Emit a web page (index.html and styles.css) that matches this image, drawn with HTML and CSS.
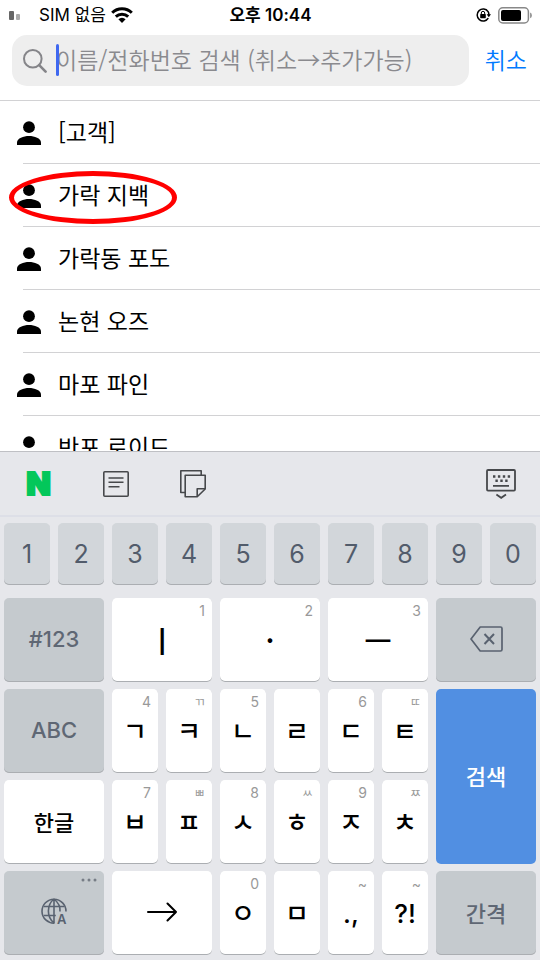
FILE: index.html
```html
<!DOCTYPE html>
<html lang="ko">
<head>
<meta charset="utf-8">
<meta name="viewport" content="width=device-width, initial-scale=1">
<title>연락처 검색</title>
<link rel="stylesheet" href="styles.css">
</head>
<body>
<div class="status">
  <div class="status-left">
    <svg width="12" height="10" viewBox="0 0 12 10" aria-hidden="true"><rect x="0" y="1" width="5" height="9" rx="1" fill="#666"/><rect x="7" y="4" width="4" height="6" rx="1" fill="#aaa"/></svg>
    <span class="carrier">SIM 없음</span>
    <svg width="22" height="16" viewBox="0 0 22 16" aria-hidden="true"><g fill="none" stroke="#000" stroke-width="3"><path d="M1.2 5.8a14 14 0 0 1 19.6 0"/><path d="M4.8 9.7a9 9 0 0 1 12.4 0"/></g><path d="M11 16l-3.6-3.8a5 5 0 0 1 7.2 0z"/></svg>
  </div>
  <div class="clock">오후 10:44</div>
  <div class="status-right">
    <svg width="15" height="14" viewBox="0 0 15 14" aria-hidden="true"><path d="M12.1 3.6A6 6 0 1 0 12.3 10.2M12.9 7A6 6 0 0 0 12.1 3.7" fill="none" stroke="#000" stroke-width="1.5"/><path d="M10.6 6.3h4.4l-2.2 2.9z"/><rect x="4.2" y="6" width="5.6" height="4.2" rx=".6"/><path d="M5.3 6V5a1.7 1.7 0 0 1 3.4 0v1" fill="none" stroke="#000"/></svg>
    <svg width="34" height="17" viewBox="0 0 34 17" aria-hidden="true"><rect x=".8" y=".8" width="29.6" height="15.2" rx="4" fill="none" stroke="#888" stroke-width="1.5"/><rect x="3" y="3" width="20" height="11" rx="2"/><path d="M32 5.6q2 .8 2 2.8t-2 2.8z" fill="#999"/></svg>
  </div>
</div>
<form class="search">
  <div class="field">
    <svg width="24" height="24" viewBox="0 0 24 24" fill="none" stroke="#858589" aria-hidden="true"><circle cx="9.8" cy="9.8" r="8.8" stroke-width="2"/><path d="M16.2 16.2l6.4 6.4" stroke-width="2.6" stroke-linecap="round"/></svg>
    <label class="query"><span class="caret"></span><input type="text" aria-label="검색" placeholder="이름/전화번호 검색 (취소→추가가능)"></label>
  </div>
  <button type="button" class="cancel">취소</button>
</form>
<svg class="defs" width="0" height="0" aria-hidden="true"><symbol id="person" viewBox="0 0 24 24"><circle cx="12" cy="6.2" r="5.9"/><path d="M0 24v-2.6c0-4 6.5-6.4 12-6.4s12 2.4 12 6.4V24z"/></symbol></svg>
<ul class="contacts">
  <li><svg class="person"><use href="#person"/></svg><a href="#c1">[고객]</a></li>
  <li><svg class="person"><use href="#person"/></svg><a href="#c2">가락 지백</a><span class="marker"></span></li>
  <li><svg class="person"><use href="#person"/></svg><a href="#c3">가락동 포도</a></li>
  <li><svg class="person"><use href="#person"/></svg><a href="#c4">논현 오즈</a></li>
  <li><svg class="person"><use href="#person"/></svg><a href="#c5">마포 파인</a></li>
  <li><svg class="person"><use href="#person"/></svg><a href="#c6">반포 로이드</a></li>
</ul>
<div class="keyboard">
  <div class="tools">
    <button class="tool naver">N</button>
    <button class="tool" aria-label="문서"><svg width="26" height="26" viewBox="0 0 26 26" fill="none" stroke="#46484b" stroke-width="1.6"><rect x=".8" y=".8" width="24.4" height="24.4" rx="1"/><path d="M5.5 7h15M5.5 11.2h15M5.5 15.7h11"/></svg></button>
    <button class="tool" aria-label="메모"><svg width="26" height="28" viewBox="0 0 26 28" fill="none" stroke="#46484b" stroke-width="1.6" stroke-linejoin="round"><path d="M5 22.5H.8V.8h20.400v4.400"/><path d="M5.200 5.200h20V19l-8 7.800h-12z"/><path d="M17.200 26.600v-7.800h7.800"/></svg></button>
    <button class="tool hide" aria-label="키보드 닫기"><svg width="30" height="30" viewBox="0 0 30 30" fill="none" stroke="#46484b" stroke-width="1.8"><rect x="1" y="1" width="28" height="20.6" rx="1"/><path d="M7 7.5h17.500" stroke-width="2.4" stroke-dasharray="2.4 2.5"/><path d="M9.400 11.700h13" stroke-width="2.4" stroke-dasharray="2.4 2.5"/><path d="M7 16.800h16M10.400 25.600l4.800 3.200 4.800-3.200"/></svg></button>
  </div>
  <div class="digits">
    <button class="key">1</button><button class="key">2</button><button class="key">3</button><button class="key">4</button><button class="key">5</button><button class="key">6</button><button class="key">7</button><button class="key">8</button><button class="key">9</button><button class="key">0</button>
  </div>
  <div class="keys">
    <button class="key wide fn">#123</button>
    <button class="key wide vowel"><span class="hint">1</span>ㅣ</button>
    <button class="key wide vowel"><span class="hint">2</span>·</button>
    <button class="key wide vowel"><span class="hint">3</span>ㅡ</button>
    <button class="key wide fn" aria-label="지우기"><svg width="33" height="26" viewBox="0 0 33 26" fill="none" stroke="#596270" stroke-width="1.7" stroke-linejoin="round"><path d="M10.200 1h20.300q1.500 0 1.500 1.500v21q0 1.500-1.500 1.500H10.200L1 13z"/><path d="M14.500 8l9.500 10M24 8l-9.500 10" stroke-width="2"/></svg></button>

    <button class="key wide fn">ABC</button>
    <button class="key"><span class="hint">4</span>ㄱ</button>
    <button class="key"><span class="hint jamo">ㄲ</span>ㅋ</button>
    <button class="key"><span class="hint">5</span>ㄴ</button>
    <button class="key">ㄹ</button>
    <button class="key"><span class="hint">6</span>ㄷ</button>
    <button class="key"><span class="hint jamo">ㄸ</span>ㅌ</button>
    <button class="key wide enter">검색</button>

    <button class="key wide word">한글</button>
    <button class="key"><span class="hint">7</span>ㅂ</button>
    <button class="key"><span class="hint jamo">ㅃ</span>ㅍ</button>
    <button class="key"><span class="hint">8</span>ㅅ</button>
    <button class="key"><span class="hint jamo">ㅆ</span>ㅎ</button>
    <button class="key"><span class="hint">9</span>ㅈ</button>
    <button class="key"><span class="hint jamo">ㅉ</span>ㅊ</button>

    <button class="key wide fn" aria-label="언어"><svg class="more" width="16" height="4" viewBox="0 0 16 4" fill="#777d86"><circle cx="2" cy="2" r="1.5"/><circle cx="8" cy="2" r="1.5"/><circle cx="14" cy="2" r="1.5"/></svg><svg class="globe" width="27" height="27" viewBox="0 0 27 27" fill="none" stroke="#596270" stroke-width="1.6"><path d="M25 13.500A12 12 0 1 0 13.500 25.200"/><path d="M13 1v24M13 1C5.500 7 5.500 19 13 25M13 1c4.500 3.600 6.400 8 6 12.500M3 8.500h20M2.800 17.500h12"/><text x="16" y="25.5" class="globe-a">A</text></svg></button>
    <button class="key wide" aria-label="다음"><svg width="30" height="20" viewBox="0 0 30 20" fill="none" stroke="#000" stroke-width="2" stroke-linecap="round" stroke-linejoin="round"><path d="M1 10h28M20.500 1.500L29 10l-8.500 8.500"/></svg></button>
    <button class="key"><span class="hint">0</span>ㅇ</button>
    <button class="key">ㅁ</button>
    <button class="key punct"><span class="hint">~</span>.,</button>
    <button class="key punct"><span class="hint">~</span>?!</button>
    <button class="key wide fn word">간격</button>
  </div>
</div>
</body>
</html>
```
FILE: styles.css
```css
* { box-sizing: border-box; }
body {
  margin: 0;
  height: 100vh;
  display: flex;
  flex-direction: column;
  background: #fff;
  color: #000;
  font-family: Inter, "Noto Sans CJK KR", sans-serif;
}
button {
  margin: 0;
  padding: 0;
  border: 0;
  background: none;
  font: inherit;
  color: inherit;
}
.defs { position: absolute; }
.status {
  display: grid;
  grid-template-columns: 1fr auto 1fr;
  align-items: center;
  height: 30px;
  padding: 0 8px 0 9px;
  font-size: 17px;
  line-height: 24px;
}
.status-left, .status-right { display: flex; align-items: center; }
.carrier { margin: 0 5px 0 18px; }
.clock { font-weight: 600; }
.status-right { justify-content: flex-end; gap: 7px; }
.search {
  display: flex;
  align-items: center;
  gap: 16px;
  margin: 0;
  padding: 5px 13px 14px 12px;
  border-bottom: 1px solid #d2d2d4;
  font-family: "Noto Sans CJK KR", sans-serif;
  font-size: 23px;
}
.field {
  flex: 1;
  display: flex;
  align-items: center;
  gap: 9px;
  height: 51px;
  padding: 0 11px;
  border-radius: 15px;
  background: #eee;
}
.query { position: relative; flex: 1; display: flex; }
.query input {
  width: 100%;
  padding: 0 0 3px;
  border: 0;
  outline: 0;
  background: none;
  font: inherit;
  font-weight: 350;
}
.query input::placeholder { color: #8a8a8e; opacity: 1; }
.caret {
  position: absolute;
  left: 0;
  top: 2px;
  width: 3px;
  height: 32px;
  border-radius: 2px;
  background: #3f68f0;
}
.cancel { padding-bottom: 4px; color: #007aff; font-weight: 350; line-height: 34px; }
.contacts {
  flex: 1;
  min-height: 0;
  overflow: hidden;
  margin: 0;
  padding: 0;
  list-style: none;
  font-family: "Noto Sans CJK KR", sans-serif;
  font-size: 23px;
}
.contacts li {
  position: relative;
  display: flex;
  align-items: center;
  gap: 17px;
  height: 63px;
  padding-left: 17px;
}
.contacts li::after {
  content: "";
  position: absolute;
  left: 23px;
  right: 0;
  bottom: 0;
  height: 1px;
  background: #d2d2d4;
}
.contacts a {
  padding-bottom: 3px;
  color: inherit;
  text-decoration: none;
  line-height: 34px;
}
.person { width: 24px; height: 24px; }
.marker {
  position: absolute;
  left: 9px;
  top: 7px;
  width: 168px;
  height: 53px;
  border: 5px solid #f00;
  border-radius: 50%;
}
.keyboard {
  border-top: 1px solid #bfc0c4;
  background: #e6e7eb;
  padding-bottom: 5px;
}
.tools {
  display: flex;
  align-items: center;
  gap: 51px;
  height: 65px;
  padding: 0 24px 0 25px;
  border-bottom: 2px solid #dddfe7;
}
.tool { display: flex; justify-content: center; }
.hide { margin-left: auto; }
.naver {
  width: 27px;
  color: #03c75a;
  font-size: 32px;
  font-weight: 900;
  line-height: 32px;
  -webkit-text-stroke: 2px #03c75a;
}
.digits, .keys {
  display: grid;
  grid-template-columns: repeat(10, 1fr);
  gap: 7px 8px;
  padding: 0 4px;
}
.digits { padding-top: 6px; padding-bottom: 13px; }
.keys { grid-auto-rows: 84px; }
.key {
  position: relative;
  display: flex;
  align-items: center;
  justify-content: center;
  padding-bottom: 3px;
  border-radius: 5px;
  background: #fff;
  box-shadow: inset 0 -1px #abaeb2;
  font-family: "Noto Sans CJK KR", sans-serif;
  font-size: 26px;
  font-weight: 500;
}
.digits .key {
  height: 62px;
  padding-bottom: 0;
  background: #d2d6da;
  color: #525c6b;
  font-family: Inter, sans-serif;
  font-size: 25px;
  font-weight: 400;
}
.wide { grid-column: span 2; }
.keys .fn {
  background: #c5cace;
  color: #5f6774;
  font-family: Inter, "Noto Sans CJK KR", sans-serif;
  font-size: 22px;
  font-weight: 500;
}
.keys .vowel { font-size: 30px; }
.keys .word { font-size: 22px; font-weight: 500; }
.keys .enter {
  grid-row: span 2;
  background: #518fe2;
  box-shadow: none;
  color: #fff;
  font-size: 22px;
}
.keys .punct { padding-bottom: 0; font-family: Inter, sans-serif; }
.hint {
  position: absolute;
  top: 4px;
  right: 7px;
  color: #999;
  font-family: Inter, sans-serif;
  font-size: 14px;
  font-weight: 400;
  line-height: 17px;
}
.jamo { font-family: "Noto Sans CJK KR", sans-serif; font-size: 12px; }
.more { position: absolute; top: 7px; right: 7px; }
.globe { overflow: visible; }
.globe-a { fill: #596270; stroke: none; font: 600 13px Inter, sans-serif; }
```
